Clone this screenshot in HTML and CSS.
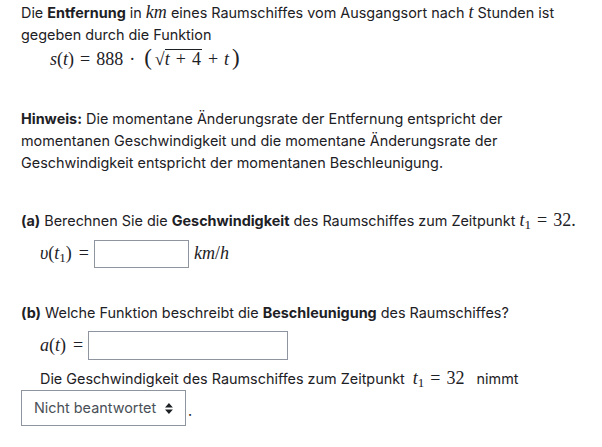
FILE: index.html
```html
<!DOCTYPE html>
<html lang="de">
<head>
<meta charset="utf-8">
<link rel="stylesheet" href="styles.css">
</head>
<body>
<div class="page">
  <p class="intro">Die <b>Entfernung</b> in <span class="m">km</span> eines Raumschiffes vom Ausgangsort nach <span class="m">t</span> Stunden ist gegeben durch die Funktion</p>
  <div class="formula">
    <span class="m">s</span><span class="r">(</span><span class="m">t</span><span class="r">)</span><span class="op">=</span><span class="r">888</span><span class="op">·</span><span class="big">(</span><span class="sqrt"><span class="rad">√</span><span class="under"><span class="m">t</span><span class="op sm">+</span><span class="r">4</span></span></span><span class="op sm">+</span><span class="m">t</span><span class="big">)</span>
  </div>

  <p class="hint"><b>Hinweis:</b> Die momentane Änderungsrate der Entfernung entspricht der momentanen Geschwindigkeit und die momentane Änderungsrate der Geschwindigkeit entspricht der momentanen Beschleunigung.</p>

  <p class="task"><b>(a)</b> Berechnen Sie die <b>Geschwindigkeit</b> des Raumschiffes zum Zeitpunkt <span class="m">t</span><sub class="sub">1</sub><span class="op">=</span><span class="r">32.</span></p>
  <div class="answer answer-a">
    <span class="mathlabel"><span class="m">υ</span><span class="r">(</span><span class="m">t</span><sub class="sub">1</sub><span class="r">)</span><span class="op eq">=</span></span>
    <span class="box box-a"></span>
    <span class="unit"><span class="m">km</span><span class="r">/</span><span class="m">h</span></span>
  </div>

  <p class="task task-b"><b>(b)</b> Welche Funktion beschreibt die <b>Beschleunigung</b> des Raumschiffes?</p>
  <div class="answer answer-b">
    <span class="mathlabel"><span class="m">a</span><span class="r">(</span><span class="m">t</span><span class="r">)</span><span class="op eq">=</span></span>
    <span class="box box-b"></span>
  </div>
  <p class="follow">Die Geschwindigkeit des Raumschiffes zum Zeitpunkt <span class="inlinemath"><span class="m">t</span><sub class="sub">1</sub><span class="op">=</span><span class="r">32</span></span> nimmt</p>
  <div class="selrow">
    <span class="select"><span class="seltext">Nicht beantwortet</span><svg class="arrows" width="8" height="11" viewBox="0 0 8 11"><path d="M4 0 L8 4.5 H0 Z M0 6.5 H8 L4 11 Z" fill="#1d2125"/></svg></span><span class="dot">.</span>
  </div>
</div>
</body>
</html>
```

FILE: styles.css
```css
html, body {
  margin: 0;
  padding: 0;
  background: #fff;
}
.page {
  font-family: Inter, "Liberation Sans", sans-serif;
  font-size: 14.4px;
  line-height: 22px;
  color: #1d2125;
  padding: 2px 10px 0 21px;
  width: 571px;
}
p { margin: 0; }
b { font-weight: 700; }
.m {
  font-family: "Liberation Serif", serif;
  font-style: italic;
  font-size: 18px;
  line-height: 1;
}
.r {
  font-family: "Liberation Serif", serif;
  font-size: 18px;
  line-height: 1;
}
.op {
  font-family: "Liberation Serif", serif;
  font-size: 18px;
  line-height: 1;
  padding: 0 6px;
}
.op.sm { padding: 0 6px; }
.sub {
  font-family: "Liberation Serif", serif;
  font-size: 13px;
  vertical-align: -3px;
  line-height: 0;
}
.formula {
  margin-left: 29px;
  height: 24px;
  line-height: 24px;
  display: flex;
  align-items: baseline;
}
.big {
  font-family: "Liberation Serif", serif;
  font-size: 23px;
  line-height: 1;
  padding: 0 3px;
}
.sqrt {
  display: inline-flex;
  align-items: baseline;
}
.rad {
  font-family: "Liberation Serif", serif;
  font-size: 18px;
  line-height: 1;
}
.under {
  border-top: 1px solid #1d2125;
  line-height: 19px;
  padding-right: 1px;
}
.hint {
  margin-top: 38px;
}
.task {
  margin-top: 36px;
}
.answer {
  display: flex;
  align-items: center;
}
.answer-a {
  margin-top: 8px;
  margin-left: 19px;
}
.mathlabel {
  display: inline-block;
  white-space: nowrap;
}
.eq { padding: 0 5px 0 7px; }
.box {
  display: inline-block;
  border: 1px solid #8f959e;
  box-sizing: border-box;
}
.box-a { width: 95px; height: 28px; }
.box-b { width: 200px; height: 29px; }
.unit { margin-left: 5px; }
.task-b { margin-top: 34px; }
.answer-b {
  margin-top: 7px;
  margin-left: 19px;
}
.follow {
  margin-top: 8px;
  margin-left: 19px;
  line-height: 22px;
}
.inlinemath { padding: 0 8px 0 4px; }
.selrow {
  margin-top: 0;
  display: flex;
  align-items: center;
}
.select {
  display: inline-flex;
  align-items: center;
  box-sizing: border-box;
  height: 36px;
  width: 165px;
  border: 1px solid #8f959e;
  padding: 0 12px;
  color: #495057;
  gap: 9px;
  white-space: nowrap;
}
.arrows { margin-top: 1px; }
.dot { margin-left: 2px; margin-top: 6px; }
```
